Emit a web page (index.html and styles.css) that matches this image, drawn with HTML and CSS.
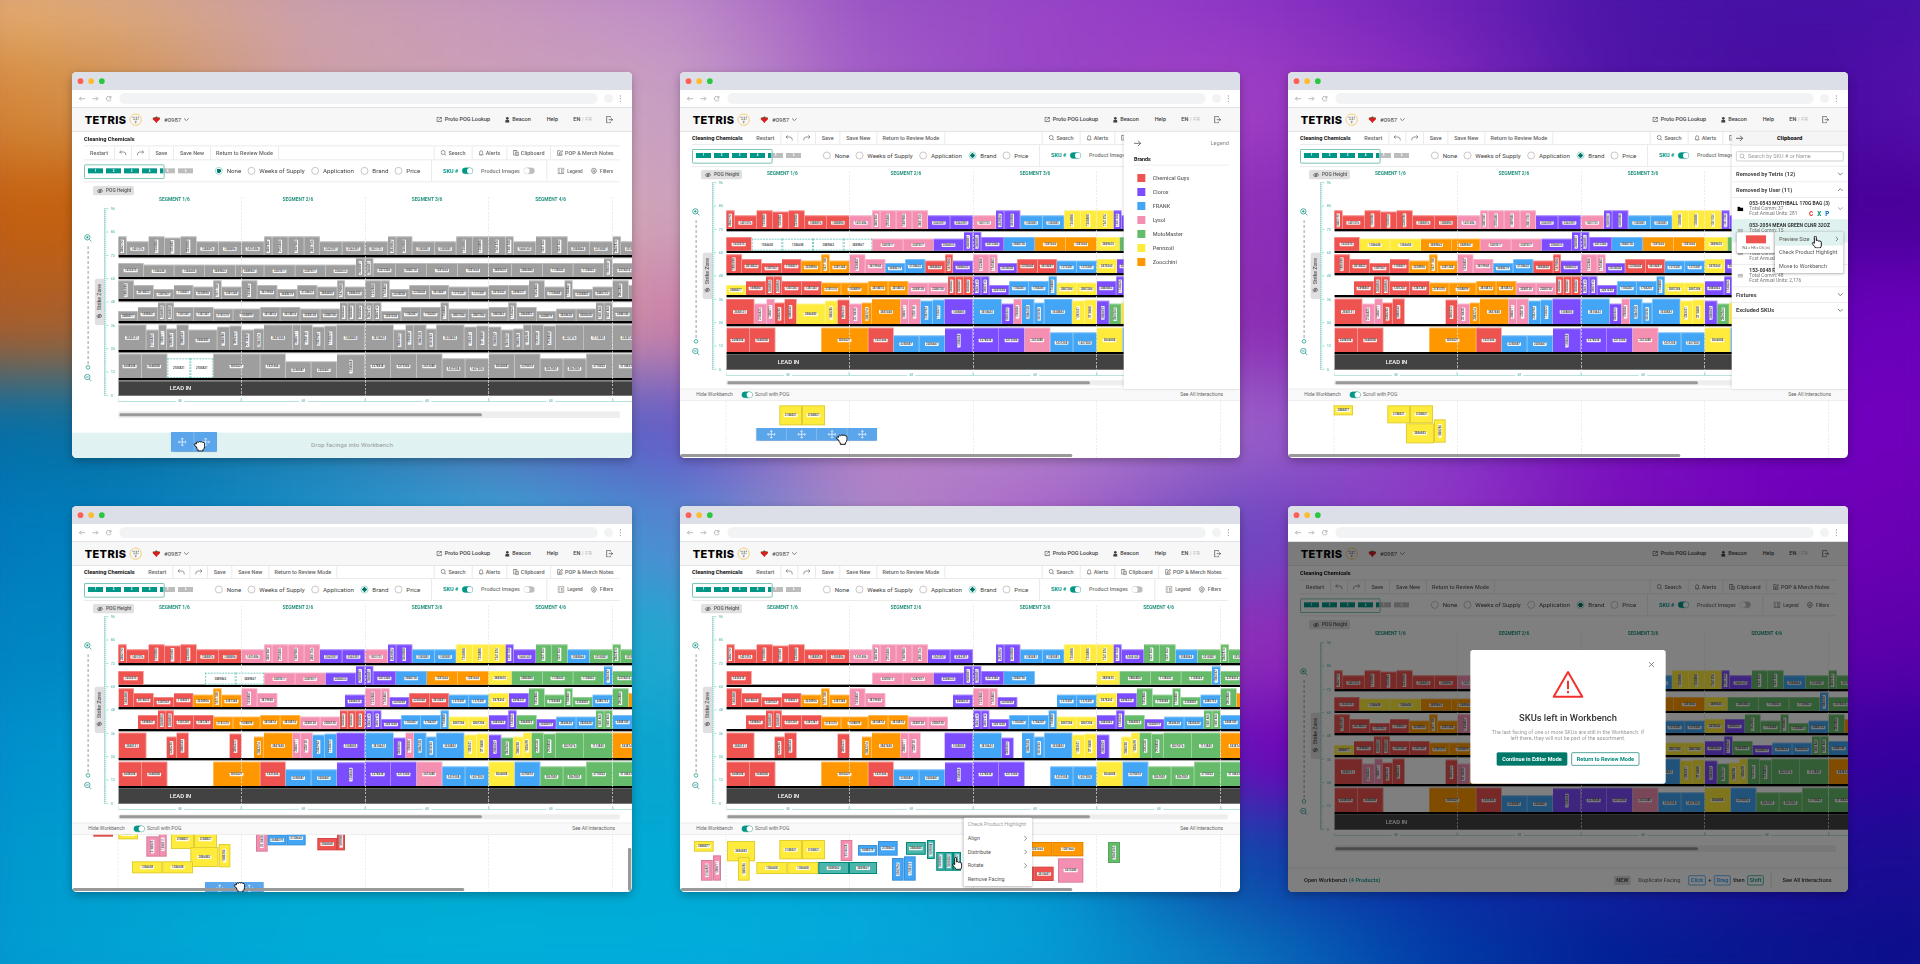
FILE: index.html
```html
<!DOCTYPE html>
<html lang="en">
<head>
<meta charset="utf-8">
<title>Tetris planogram editor</title>
<link rel="stylesheet" href="styles.css">
</head>
<body>
<div class="stage">
<div class="backdrop" id="backdrop"></div>
<main class="gallery" id="gallery"></main>
</div>
<script src="app.js"></script>
</body>
</html>
```

FILE: styles.css
```css
* { box-sizing: border-box; }
body {
  margin: 0;
  font-family: Roboto, "Liberation Sans", sans-serif;
  color: #424242;
  background: #5a2bb0;
}
.stage {
  position: relative;
  width: 1920px;
  height: 964px;
  overflow: hidden;
  contain: paint;
}
svg { display: block; flex: none; }
.backdrop {
  position: absolute;
  inset: -60px;
  display: flex;
  flex-direction: column;
  filter: blur(34px);
}
.backdrop div { flex: 1; }
.gallery {
  position: relative;
  display: grid;
  grid-template-columns: repeat(3, 560px);
  grid-auto-rows: 386px;
  column-gap: 48px;
  row-gap: 48px;
  padding: 72px 72px 0;
}
.frame {
  width: 560px;
  height: 386px;
  border-radius: 5px;
  box-shadow: 0 3px 10px rgba(0, 0, 0, .28);
}
/* windows are authored at three times their shown size */
.win {
  position: relative;
  width: 1680px;
  height: 1158px;
  transform: scale(.333333);
  transform-origin: 0 0;
  display: flex;
  flex-direction: column;
  overflow: hidden;
  border-radius: 14px;
  background: #fff;
}
/* browser chrome */
.titlebar { height: 54px; flex: none; background: #dcdfe7; display: flex; align-items: center; gap: 15px; padding-left: 17px; }
.dot { width: 17px; height: 17px; border-radius: 50%; }
.dot.r { background: #ff5f57; }
.dot.y { background: #febc2e; }
.dot.g { background: #28c840; }
.navbar { height: 54px; flex: none; border-bottom: 3px solid #dfe1e8; display: flex; align-items: center; padding: 0 24px 0 20px; color: #999; }
.navbar svg + svg { margin-left: 20px; }
.url { width: 1435px; height: 33px; border-radius: 17px; background: #f1f3f4; margin-left: 22px; }
.avatar { width: 27px; height: 27px; border-radius: 50%; background: #f1f3f4; margin: 0 19px; }
/* header */
.app { position: relative; flex: 1; min-height: 0; display: flex; flex-direction: column; }
.header { height: 72px; flex: none; background: #f7f7f7; border-bottom: 3px solid #e4e4e4; display: flex; align-items: center; padding-left: 38px; font-size: 16.5px; font-weight: 500; white-space: nowrap; }
.logo { font-family: Inter, sans-serif; font-weight: 800; font-size: 33px; letter-spacing: 1.2px; color: #000; width: 133px; flex: none; }
.seal { margin-right: 30px; }
.store { display: flex; align-items: center; gap: 11px; font-size: 18px; font-weight: 400; color: #444; width: 852px; flex: none; }
.store b { font-weight: 400; margin-right: -4px; }
.hlink { display: flex; align-items: center; gap: 8px; flex: none; }
.hl1 { width: 206px; }
.hl2 { width: 125px; }
.hl3 { width: 80px; }
.hl4 { width: 98px; }
.hl4 span { color: #bbb; font-weight: 400; }
/* toolbar */
.pagetitle { height: 40px; flex: none; padding-left: 36px; line-height: 42px; font-size: 17px; font-weight: 700; color: #111; }
.toolbar { margin: 0 37px 0 36px; flex: none; height: 39px; display: flex; border-bottom: 3px solid #ebebeb; font-size: 16.5px; font-weight: 500; color: #666; }
.toolbar.tall { height: 45px; border-top: 3px solid #ebebeb; }
.toolbar .lead { width: 175px; flex: none; font-size: 17px; font-weight: 700; color: #111; align-self: center; white-space: nowrap; }
.cell { display: flex; flex: none; align-items: center; justify-content: center; gap: 6px; border-right: 3px solid #ebebeb; white-space: nowrap; }
.c1 { width: 93px; } .c2 { width: 51px; } .c3 { width: 53px; } .c4 { width: 73px; } .c5 { width: 111px; } .c6 { width: 204px; }
.push { margin-left: auto; border-left: 3px solid #ebebeb; }
.c7 { width: 117px; } .c8 { width: 104px; } .c9 { width: 131px; } .c10 { width: 206px; border-right: 0; }
.filters { margin: 0 37px 0 36px; flex: none; height: 66px; display: flex; align-items: center; border-bottom: 3px solid #ebebeb; font-size: 18.5px; color: #444; white-space: nowrap; }
.filters > * { flex: none; }
.minimap { width: 393px; position: relative; display: flex; gap: 9px; padding-left: 12px; }
.minimap::before { content: ""; position: absolute; left: 0; top: -12px; width: 236px; height: 38px; border: 3px solid #80c4b8; border-radius: 3px; }
.minimap i { width: 45px; height: 15px; background: #009688; color: #fff; font: 700 9px/15px Roboto; text-align: center; }
.minimap i.half { background: linear-gradient(90deg, #009688 8px, #bdbdbd 8px); }
.minimap i.off { background: #bdbdbd; }
.radio { display: flex; align-items: center; gap: 12px; }
.radio::before { content: ""; width: 19px; height: 19px; border: 2px solid #aaa; border-radius: 50%; background: #fff; }
.radio.on::before { border-color: #7cc4bb; background: radial-gradient(#00796b 6px, #fff 7px); }
.r1 { width: 98px; } .r2 { width: 191px; } .r3 { width: 148px; } .r4 { width: 102px; } .r5 { width: 109px; }
.opts { align-self: stretch; display: flex; align-items: center; border-left: 3px solid #ebebeb; padding-left: 33px; width: 346px; font-size: 16.5px; font-weight: 500; color: #777; }
.opts .sku { color: #009688; width: 57px; font-weight: 700; }
.opts .pi { margin-left: 24px; width: 128px; }
.toggle { width: 33px; height: 19px; flex: none; border-radius: 10px; background: #bdbdbd; border: 1px solid #bdbdbd; display: flex; }
.toggle::before { content: ""; width: 17px; height: 17px; border-radius: 50%; background: #fff; }
.toggle.on { background: #009688; border-color: #009688; justify-content: flex-end; }
.minor { align-self: stretch; display: flex; align-items: center; gap: 9px; border-left: 3px solid #ebebeb; padding-left: 31px; font-size: 14px; font-weight: 500; color: #666; }
.minor span { margin-right: 15px; }
.minor span:last-child { margin-right: 0; }
/* planogram */
.heightpill { position: absolute; left: 63px; top: 186px; width: 123px; height: 28px; background: #e0e0e0; border-radius: 5px; font-size: 14.5px; font-weight: 500; display: flex; align-items: center; gap: 8px; padding-left: 12px; color: #555; white-space: nowrap; z-index: 2; }
.win.titled .heightpill { top: 234px; }
.pog { flex: none; height: 629px; margin-top: 6px; display: flex; }
.win.titled .pog { margin-top: 38px; }
.zoomer { width: 24px; margin-left: 36px; padding-top: 117px; display: flex; flex-direction: column; align-items: center; color: #00897b; flex: none; }
.zoomer .track { width: 5px; height: 356px; margin-top: 13px; background: repeating-linear-gradient(#c4c4c4 0 9px, transparent 9px 15px); }
.zoomer .knob { width: 14px; height: 14px; border: 3px solid #4db6a6; border-radius: 50%; margin-bottom: 12px; background: #fff; }
.strike { margin: 251px 0 0 8px; width: 28px; height: 139px; background: #e0e0e0; writing-mode: vertical-rl; transform: rotate(180deg); border-radius: 0 8px 8px 0; display: flex; align-items: center; gap: 9px; padding-top: 18px; font-size: 15.5px; font-weight: 500; color: #555; flex: none; }
.ruler { width: 43px; padding-top: 36px; flex: none; }
.board { position: relative; flex: 1; min-width: 0; overflow: hidden; }
.segnames { display: grid; grid-template-columns: 369px 372px 370px 372px; height: 28px; font-size: 14.5px; font-weight: 700; line-height: 28px; color: #26937f; text-align: center; }
.segnames span:nth-child(-n+2) { padding-right: 33px; }
.shelf { display: flex; align-items: flex-end; border-bottom: 7px solid #000; overflow: hidden; }
.s1 { height: 159px; } .s2 { height: 65px; } .s3 { height: 67px; } .s4 { height: 66px; } .s5 { height: 87px; } .s6 { height: 84px; }
.tile { flex: none; display: flex; align-items: center; justify-content: center; border-right: 2px solid rgba(255, 255, 255, .5); border-top: 3px solid rgba(255, 255, 255, .3); }
.tile span { font-size: 8.6px; line-height: 11px; font-weight: 700; background: rgba(255, 255, 255, .9); color: #555; padding: 0 3px; border-radius: 2px; letter-spacing: .1px; }
.tile.v span { writing-mode: vertical-rl; transform: rotate(180deg); padding: 3px 0; }
.R { background-color: #ef5350; } .P { background-color: #f48fb1; } .U { background-color: #7c4dff; } .B { background-color: #42a5f5; }
.Y { background-color: #ffeb3b; } .O { background-color: #ff9800; } .G { background-color: #66bb6a; } .T { background-color: #4db6ac; }
.win.gray .shelf .tile { background-color: #9e9e9e; }
.win.gray .shelf { box-shadow: 0 3px #c4c4c4; position: relative; }
.shelf .tile.gap { visibility: hidden; }
.shelf .tile.ghost, .win.gray .shelf .tile.ghost { background: #fff; border: 3px dashed #80cbc4; }
.leadin { height: 47px; background: #424242; border-bottom: 3px solid #777; color: #fff; font-size: 17.5px; font-weight: 500; line-height: 44px; text-align: center; padding-right: 1168px; white-space: nowrap; }
.seams { position: absolute; left: 0; top: 6px; height: 597px; display: grid; grid-template-columns: 370px 372px 370px 372px; }
.seams i { background: repeating-linear-gradient(#e4e4e4 0 7px, transparent 7px 11px) right / 2px 100% no-repeat; }
.widths { display: grid; grid-template-columns: 369px 372px 370px 372px 372px; height: 26px; padding-top: 8px; color: #80cbc4; font-size: 10px; font-weight: 700; }
.widths span { display: flex; align-items: center; gap: 7px; height: 14px; }
.widths span::before, .widths span::after { content: ""; flex: 1; height: 8px; border-bottom: 2px solid #9ad6cd; margin-bottom: 6px; }
.widths span::before { border-left: 2px solid #9ad6cd; }
.widths span::after { border-right: 2px solid #9ad6cd; }
.scroll { flex: none; margin: 5px 37px 0 139px; height: 15px; background: #eee; display: flex; align-items: center; }
.win.titled .scroll { margin-top: 20px; height: 20px; }
.scroll i { width: 1088px; height: 9px; margin-left: 3px; border-radius: 5px; background: #999; }
/* workbench */
.benchbar { position: relative; flex: none; margin-top: 10px; height: 36px; background: #f9f9f9; border-top: 2px solid #e8e8e8; border-bottom: 2px solid #e8e8e8; display: flex; align-items: center; font-size: 15px; color: #666; padding: 0 51px 0 49px; }
.benchbar .hide { width: 136px; }
.benchbar .toggle { margin: 0 7px 0 0; }
.benchbar .all { margin-left: auto; }
.bench { position: relative; flex: 1; overflow: hidden; }
.bench .lines { position: absolute; inset: 0; padding-left: 137px; display: grid; grid-template-columns: 2px 370px 372px 370px 372px; }
.bench .lines i { background: repeating-linear-gradient(#e6e6e6 0 7px, transparent 7px 11px) right / 2px 100% no-repeat; }
.bench .tile { position: absolute; border: 3px solid rgba(0, 0, 0, .12); }
.bench .tile.T { border-color: #00897b; }
.drag { position: absolute; display: flex; background: #5ba5ea; box-shadow: 0 2px 5px rgba(0, 0, 0, .25); color: #fff; }
.drag div { flex: 1; display: flex; align-items: center; justify-content: center; }
.drag div + div { border-left: 2px solid #8cc3f4; }
.cursor { position: absolute; z-index: 6; }
.hbar { position: absolute; left: 2px; bottom: 3px; width: 1175px; height: 9px; border-radius: 5px; background: #999; }
.vbar { position: absolute; right: 2px; bottom: 3px; width: 10px; height: 130px; border-radius: 5px; background: #999; }
.dropzone { margin-top: auto; height: 76px; background: #e0f2f1; text-align: center; line-height: 77px; font-size: 18.7px; letter-spacing: .2px; color: #999; }
/* side panels */
.panel { position: absolute; right: 0; top: 71px; width: 349px; height: 772px; background: #fff; box-shadow: -3px 0 9px rgba(0, 0, 0, .2); z-index: 3; }
.legend { padding: 22px 33px 0 31px; }
.legend .top { display: flex; justify-content: space-between; align-items: center; color: #888; font-size: 17px; height: 26px; }
.legend .top svg { color: #333; }
.legend h4 { margin: 22px 0 16px; height: 32px; padding-bottom: 6px; border-bottom: 3px solid #eee; line-height: 24px; font-size: 16px; color: #111; font-weight: 700; }
.legend .row { display: flex; align-items: center; height: 42px; gap: 22px; padding-left: 10px; font-size: 16.5px; font-weight: 500; color: #666; }
.legend .row i { width: 24px; height: 24px; }
.clip .top { height: 42px; background: #f5f5f5; border-bottom: 3px solid #e6e6e6; display: flex; align-items: center; padding-left: 13px; font-size: 17.5px; font-weight: 700; color: #222; }
.clip .top b { flex: 1; text-align: center; padding-right: 36px; }
.clip .find { margin: 17px 13px 13px; height: 30px; border: 2px solid #bbb; border-radius: 4px; display: flex; align-items: center; gap: 9px; padding-left: 8px; font-size: 16.5px; color: #999; }
.clip .sec { height: 47px; border-top: 3px solid #ececec; display: flex; align-items: center; justify-content: space-between; padding: 0 15px 0 13px; font-size: 17px; font-weight: 700; color: #444; }
.clip .sec.last { border-bottom: 3px solid #ececec; height: 50px; }
.clip .item { position: relative; height: 67px; border-top: 3px solid #ececec; display: flex; align-items: center; padding: 0 15px 0 17px; gap: 18px; font-size: 14.5px; line-height: 16px; color: #777; white-space: nowrap; }
.clip .item b { display: block; font-size: 14.8px; color: #333; }
.clip .item.hot { background: #dff2f0; border-top-color: #dff2f0; }
.clip .item .txt { width: 264px; }
.clip .item .txt + svg { margin-left: -11px; }
.clip .cxp { position: absolute; right: 56px; bottom: 4px; display: flex; gap: 12px; font-size: 19px; line-height: 24px; font-weight: 900; }
.preview { position: absolute; left: 15px; top: 302px; width: 116px; height: 62px; background: #fff; border-radius: 5px; box-shadow: 0 1px 6px rgba(0, 0, 0, .3); text-align: center; font-size: 11px; padding-top: 9px; color: #666; z-index: 5; }
.preview i { display: block; width: 60px; height: 24px; background: #ef5350; margin: 0 auto 8px; }
.menu { position: absolute; z-index: 5; width: 205px; background: #fff; border-radius: 4px; box-shadow: 0 2px 8px rgba(0, 0, 0, .3); font-size: 16.3px; color: #555; white-space: nowrap; overflow: hidden; }
.menu div { height: 41px; display: flex; align-items: center; justify-content: space-between; padding: 0 14px 0 12px; }
.menu .hot { background: #dff2f0; }
.menu .dim { color: #9e9e9e; }
.clip .menu { left: 130px; top: 301px; }
.m5 { left: 851px; top: 827px; }
/* closing dialog */
.footer { margin-top: auto; height: 74px; border-top: 3px solid #e6e6e6; display: flex; align-items: center; font-size: 17px; font-weight: 500; color: #333; padding: 0 49px 0 48px; white-space: nowrap; }
.footer em { font-style: normal; color: #009688; margin-left: 5px; }
.footer .new { margin-left: auto; background: #ddd; border-radius: 4px; padding: 4px 7px; font-weight: 700; margin-right: 23px; color: #555; }
.footer .dup { color: #777; margin-right: 24px; }
.footer .key { border: 2px solid #2196f3; border-radius: 4px; color: #2196f3; padding: 3px 5px; margin-right: 8px; }
.footer .plus { margin-right: 8px; }
.footer .key.t { border-color: #009688; color: #009688; margin: 0 21px 0 8px; }
.footer .see { border-left: 3px solid #e0e0e0; line-height: 46px; padding-left: 32px; }
.shade { position: absolute; inset: 0; background: rgba(0, 0, 0, .5); z-index: 8; }
.dialog { position: absolute; z-index: 9; left: 547px; top: 324px; width: 586px; height: 401px; background: #fff; border-radius: 8px; padding-top: 61px; display: flex; flex-direction: column; align-items: center; text-align: center; }
.dialog .close { position: absolute; right: 34px; top: 35px; color: #555; }
.dialog h3 { margin: 42px 0 17px; font-size: 28px; line-height: 32px; font-weight: 500; color: #333; }
.dialog p { margin: 0; font-size: 16px; line-height: 19px; color: #999; width: 476px; }
.dialog .btns { display: flex; gap: 12px; margin-top: 33px; }
.dialog .btns span { height: 40px; line-height: 36px; border: 2px solid #00796b; border-radius: 4px; font-size: 16.5px; font-weight: 700; color: #00897b; padding: 0 14px; white-space: nowrap; }
.dialog .btns .main { background: #00796b; color: #fff; padding: 0 15px; }
```

FILE: app.js
```js
const svg = (w, h, body, vb) =>
  `<svg width="${w}" height="${h}" viewBox="${vb || `0 0 ${w} ${h}`}" fill="none" stroke="currentColor" stroke-width="2">${body}</svg>`;

const icon = {
  back: svg(20, 16, '<path d="M19 8H2M8 2 2 8l6 6"/>'),
  fwd: svg(20, 16, '<path d="M1 8h17M12 2l6 6-6 6"/>'),
  reload: svg(20, 18, '<path d="M16 5A7 7 0 1 0 17 11M17 1v6h-6"/>'),
  more: svg(6, 22, '<g fill="currentColor" stroke="none"><circle cx="3" cy="3" r="2"/><circle cx="3" cy="11" r="2"/><circle cx="3" cy="19" r="2"/></g>'),
  seal: svg(40, 40, '<circle cx="20" cy="20" r="17" stroke="#f5cf72" stroke-width="3"/><g stroke="none" fill="#999"><path d="M10 11h4v4h-4zM16 11h3v4h-3zM21 11h3v4h-3zM26 11h4v4h-4zM13 17h5v4h-5zM20 16h4v5h-4zM26 17h3v4h-3zM17 23h6v3h-6zM18 27h4v4h-4z"/></g>'),
  leaf: svg(24, 22, '<path stroke="none" fill="#d6201f" d="M1 5q5-3 8 0h6q3-3 8 0 1 4-2 7-5 2-9 10-4-8-9-10-3-3-2-7z"/><path stroke="none" fill="#35703a" d="M12 0l2 3h3l-2 4H9L7 3h3z"/>'),
  down: svg(16, 10, '<path d="M1 1l7 7 7-7"/>'),
  up: svg(16, 10, '<path d="M1 9l7-7 7 7"/>'),
  right: svg(10, 16, '<path d="M1 1l7 7-7 7"/>'),
  out: svg(17, 17, '<path d="M9 2H2v13h13V9M7 10l8-8M10 2h5v5"/>'),
  user: svg(14, 18, '<g fill="currentColor" stroke="none"><circle cx="7" cy="5" r="4"/><path d="M1 18V12q0-3 6-3t6 3v6z"/></g>'),
  exit: svg(22, 22, '<path d="M13 5V1H2v20h11v-4M8 11h12M16 7l4 4-4 4"/>'),
  undo: svg(24, 18, '<path d="M7 1 2 6l5 5M2 6h12q7 0 7 10"/>'),
  redo: svg(24, 18, '<path d="M17 1l5 5-5 5M22 6H10q-7 0-7 10"/>'),
  search: svg(17, 18, '<circle cx="7.500" cy="7.500" r="6"/><path d="M12 12l4 5"/>'),
  bell: svg(15, 18, '<path d="M1 14h13l-2-4V6q-1-4-4.500-4T3 6v4zM6 17h3"/>'),
  clip: svg(18, 18, '<path d="M5 15H1V2h11v3M4 2V1h5v2M7 7h9v10H7zM10 11h3M10 14h3"/>'),
  note: svg(18, 18, '<path d="M9 2H2v14h13V9M7 11l1-4 7-6 2 2-7 7zM5 13h6"/>'),
  legend: svg(20, 19, '<path d="M1 1h18v17H1zM5 6h2M10 6h5M5 10h2M10 10h5M5 14h2M10 14h5"/>'),
  gear: svg(19, 19, '<path d="M7 1h5l1 3 3 1 2 4-2 4-3 1-1 4H7l-1-4-3-1-2-4 2-4 3-1z"/><circle cx="9.500" cy="9.500" r="3"/>'),
  eye: svg(19, 17, '<path d="M1 9q3-5 8-5t8 5q-3 5-8 5T1 9zM4 15 15 2"/><circle cx="9" cy="9" r="2.500"/>'),
  plus: svg(24, 24, '<circle cx="10" cy="10" r="8"/><path d="M16 16l6 6M6 10h8M10 6v8"/>'),
  minus: svg(24, 24, '<circle cx="10" cy="10" r="8"/><path d="M16 16l6 6M6 10h8"/>'),
  arrow: svg(22, 18, '<path d="M0 9h20M12 1l8 8-8 8"/>'),
  move: svg(26, 26, '<path d="M13 2v22M2 13h22M9 5l4-4 4 4M9 21l4 4 4-4M5 9l-4 4 4 4M21 9l4 4-4 4"/>'),
  folder: svg(18, 15, '<path stroke="none" fill="#000" d="M0 1h7l2 3h9v11H0z"/>'),
  lines: svg(18, 12, '<path stroke="#888" d="M1 2h16M1 6h16M1 10h16"/>'),
  close: svg(17, 17, '<path d="M1 1l15 15M16 1 1 16"/>'),
  warn: svg(94, 84, '<path d="M47 5 4 79h86z" stroke="#f2302c" stroke-width="6" stroke-linejoin="round"/><path d="M47 31v26M47 62v7" stroke="#f2302c" stroke-width="6"/>'),
  grab: svg(36, 34, '<path fill="#fff" stroke="#111" stroke-width="3" stroke-linejoin="round" d="M9 19 4 16q-4-5 1-6l4 1V7q2-4 6-1 3-4 7-1 4-3 6 1 5-1 6 4v9q-1 6-5 9v4H14v-4q-4-3-5-9z"/>'),
  point: svg(32, 38, '<path fill="#fff" stroke="#111" stroke-width="3" stroke-linejoin="round" d="M9 23V5q0-4 3-4t3 4v10q4-3 6 1 3-2 5 1 4-1 4 3v8q0 5-3 9H13q-3-5-8-10-4-5-1-6 2-1 5 2z"/>')
};

// Each facing: [right edge, brand colour, height]; a fourth value turns the label
const shelves = [
  [[170,'R',56],[236,'R',41],[284,'R',56],[332,'R',52],[380,'R',56],[446,'R',41],[515,'R',41],[583,'P',41],[607,'P',56],[655,'P',56],[703,'P',56],[750,'P',56],[817,'U',41],[885,'U',41],[954,'P',41],[979,'U',56],[1027,'U',56],[1094,'B',41],[1159,'B',41],[1208,'Y',56],[1257,'Y',56],[1307,'Y',56],[1331,'U',56],[1398,'U',41],[1445,'G',56],[1493,'G',56],[1559,'B',41],[1628,'G',41],[1653,'G',56],[1720,'G',41]],
  [[221,'R',41],[313,'Y',36],[405,'Y',36],[497,'O',36],[583,'O',36],[676,'P',36],[767,'P',36],[858,'U',36],[884,'U',56],[910,'U',56],[978,'U',41],[1071,'B',41],[1163,'O',41],[1257,'O',41],[1325,'Y',41],[1418,'G',41],[1510,'G',41],[1602,'G',41],[1628,'B',55],[1700,'G',41]],
  [[192,'R',56],[251,'R',42],[312,'R',30],[370,'R',42],[430,'O',37],[455,'O',56],[515,'O',37],[562,'P',56],[622,'P',42],[682,'B',30],[742,'B',42],[802,'R',37],[825,'R',56],[885,'U',37],[934,'P',56],[959,'P',56],[1018,'U',30],[1079,'R',42],[1137,'R',42],[1197,'B',37],[1257,'B',37],[1317,'Y',42],[1377,'U',42],[1424,'G',56],[1484,'G',37],[1508,'G',56],[1568,'G',30],[1628,'B',37],[1676,'G',56],[1740,'O',42]],
  [[204,'Y',30],[264,'R',42],[288,'R',56],[312,'R',56],[371,'R',42],[431,'R',42],[490,'O',37],[571,'O',37],[631,'O',42],[691,'O',42],[751,'P',37],[810,'P',37],[833,'R',56],[858,'R',56],[885,'R',56],[910,'U',56],[934,'U',56],[994,'U',30],[1053,'B',42],[1112,'B',42],[1137,'B',56],[1196,'Y',37],[1257,'Y',37],[1315,'U',42],[1340,'U',56],[1400,'G',42],[1459,'U',30],[1519,'B',37],[1578,'B',37],[1603,'G',56],[1628,'G',56],[1690,'B',42]],
  [[229,'R',76],[266,'P',61],[290,'P',76],[320,'R',64],[356,'R',76],[442,'Y',61],[479,'Y',70],[515,'R',73],[552,'P',61],[582,'O',64],[668,'O',76],[692,'P',76],[728,'P',76],[764,'B',70],[800,'B',73],[885,'U',76],[971,'B',76],[1007,'U',61],[1032,'P',76],[1069,'B',76],[1099,'B',64],[1183,'B',76],[1220,'Y',70],[1257,'Y',73],[1294,'U',70],[1330,'G',61],[1360,'Y',64],[1385,'Y',76],[1421,'G',76],[1457,'G',73],[1542,'G',76],[1628,'G',76],[1720,'O',76]],
  [[215,'R',73],[292,'R',73],[361,'Y',59],[430,'Y',59],[571,'O',73],[647,'R',73],[724,'B',50],[801,'B',50],[885,'U',71,1],[963,'U',73],[1040,'U',73],[1117,'P',73],[1186,'B',59],[1257,'B',59],[1334,'Y',73],[1411,'B',73],[1480,'G',59],[1549,'G',59],[1628,'G',73],[1710,'G',73]]
];

const codes = [
  '2882192 1401276 1550586 1575055 2230786 1288876 1288896 1431406 3887587 2755486 1889586 2881756 3343297 3343297 1831721 2830057 3460588 1383881 1383881 1268008 1268808 1241574 1381748 1446143 1821552 1821552 3588864 2318087 2847816 3018422',
  '1433415 1384608 1384608 3889862 3889867 3287817 2287817 2284533 2848801 2848801 3473386 3884736 1281664 1281664 2889435 2886884 1138662 1138662 1584747 2378414',
  '1886088 2818823 1387561 1108831 3238906 1871188 3381348 1838857 3819948 3688219 2138662 2884840 1870008 2886023 1232888 1745883 3418028 2238468 2818487 1373281 1373281 2878262 2898321 1852884 1738688 1788887 3328805 2486732 2863884 1442873',
  '2888877 1898861 2688055 2688055 1387287 1387287 3181315 1508899 3818874 3818874 2288128 2288128 3588282 3588282 3588282 2887214 2887214 2281028 1784287 1784287 1758888 2887284 2887284 3885862 1738225 2868852 3428819 2828628 2828628 1881846 1881846 3888180',
  '2588121 2184825 1288711 3288255 3888563 2886882 1888286 3804272 2518428 2882214 3887488 2888711 1228136 2382962 1728372 1388885 3818443 2886663 1788854 3884528 3818746 3528882 1283621 3718488 2888829 2842343 2888258 1828490 2202324 2928858 2821876 1113880 3828745',
  '2688508 3648808 2188821 2188821 3803421 1431466 3258887 2288487 1358848 3278838 3273286 3412480 1437208 1437208 2846888 3278814 3867881 3867881 3718822 3718822'
].map(s => s.split(' '));

const tile = (c, w, h, code, cls = '', extra = '') =>
  `<div class="tile ${c} ${cls}" style="${extra}width:${w}px;height:${h}px"><span>${code}</span></div>`;

function shelfRows(cfg) {
  return shelves.map((row, r) => {
    let x = 145;
    const html = row.map(([end, c, h, turn], i) => {
      const w = end - x;
      x = end;
      let cls = w < 52 || turn ? 'v' : '';
      const key = `${r + 1}.${i}`;
      if (cfg.gone.includes(key)) cls += ' gap';
      if (cfg.ghost.includes(key)) cls += ' ghost';
      return tile(c, w, h, codes[r][i], cls);
    }).join('');
    return `<div class="shelf s${r + 1}">${html}</div>`;
  }).join('');
}

function ruler() {
  let d = '', t = '';
  for (let i = 0; i <= 96; i++) {
    const y = 5 + i * 5.833;
    d += `M1 ${y}h${i % 12 ? 6 : 12}`;
    if (i % 12 === 0) t += `<text x="20" y="${y + 4}">${96 - i}</text>`;
  }
  return svg(43, 572, `<path stroke="#80cbc4" d="M1 4v562${d}"/><g fill="#80cbc4" stroke="none" font-size="11" font-weight="700">${t}</g>`);
}

const toolbar = lead => `
<div class="toolbar ${lead ? '' : 'tall'}">
  ${lead ? '<span class="lead">Cleaning Chemicals</span>' : ''}
  <div class="cell c1">Restart</div><div class="cell c2">${icon.undo}</div><div class="cell c3">${icon.redo}</div>
  <div class="cell c4">Save</div><div class="cell c5">Save New</div><div class="cell c6">Return to Review Mode</div>
  <div class="cell c7 push">${icon.search}Search</div><div class="cell c8">${icon.bell}Alerts</div>
  <div class="cell c9">${icon.clip}Clipboard</div><div class="cell c10">${icon.note}POP &amp; Merch Notes</div>
</div>`;

const filters = pick => `
<div class="filters">
  <div class="minimap"><i>1</i><i>2</i><i>3</i><i>4</i><i class="half">5</i><i class="off">6</i></div>
  ${['None', 'Weeks of Supply', 'Application', 'Brand', 'Price'].map((n, i) =>
    `<div class="radio r${i + 1} ${n === pick ? 'on' : ''}">${n}</div>`).join('')}
  <div class="opts"><span class="sku">SKU #</span><i class="toggle on"></i><span class="pi">Product Images</span><i class="toggle"></i></div>
  <div class="minor">${icon.legend}<span>Legend</span>${icon.gear}<span>Filters</span></div>
</div>`;

const place = (x, y) => `left:${x}px;top:${y}px;`;
const cursor = (name, x, y) => `<div class="cursor" style="${place(x, y)}">${icon[name]}</div>`;
const drag = (x, y, w, h, n) =>
  `<div class="drag" style="${place(x, y)}width:${w}px;height:${h}px">${`<div>${icon.move}</div>`.repeat(n)}</div>`;

// Workbench items: [x, y, w, h, colour, code], measured from the workbench corner
const bench = items => items.map(([x, y, w, h, c, code]) =>
  tile(c, w, h, code, w < 50 ? 'v' : '', place(x, y))).join('');

const benchArea = (items, more) => `
<div class="benchbar"><span class="hide">Hide Workbench</span><i class="toggle on"></i><span>Scroll with POG</span><span class="all">See All Interactions</span></div>
<div class="bench"><div class="lines"><i></i><i></i><i></i><i></i><i></i></div>${bench(items)}${more}<i class="hbar"></i></div>`;

const legend = `
<aside class="panel legend"><div class="top">${icon.arrow}<span>Legend</span></div><h4>Brands</h4>
${[['R', 'Chemical Guys'], ['U', 'Clorox'], ['B', 'FRANK'], ['P', 'Lysol'], ['G', 'MotoMaster'], ['Y', 'Pennzoil'], ['O', 'Zoocchini']]
  .map(([c, n]) => `<div class="row"><i class="${c}"></i>${n}</div>`).join('')}</aside>`;

const clipboard = `
<aside class="panel clip"><div class="top">${icon.arrow}<b>Clipboard</b></div>
<div class="find">${icon.search}Search by SKU # or Name</div>
<div class="sec">Removed by Tetris (12)${icon.down}</div>
<div class="sec">Removed by User (11)${icon.up}</div>
<div class="item">${icon.folder}<div class="txt"><b>053-0543 MOTHBALL 170G BAG (3)</b>Total Comm: 37<br>Fcst Annual Units: 281</div>${icon.down}
<div class="cxp"><span style="color:#e53935">C</span><span style="color:#0f9d76">X</span><span style="color:#1976d2">P</span></div></div>
<div class="item hot">${icon.lines}<div class="txt"><b>053-2054 MEAN GREEN CLNR 32OZ</b>Total Comm: 15<br>Fcst Annual Units: 96</div></div>
<div class="item">${icon.lines}<div class="txt"><b>053-8822 CLNR</b>Total Comm: 22<br>Fcst Annual Units: 310</div></div>
<div class="item">${icon.lines}<div class="txt"><b>153-0048 FABRIC CLNR</b>Total Comm: 48<br>Fcst Annual Units: 2,176</div></div>
<div class="sec">Fixtures${icon.down}</div><div class="sec last">Excluded SKUs${icon.down}</div>
<div class="preview"><i></i>W4 x H8 x D5 (in)</div>
<div class="menu"><div class="hot">Preview Size${icon.right}</div><div>Check Product Highlight</div><div>Move to Workbench</div></div>
${cursor('point', 239, 312)}
</aside>`;

const cursorMenu = `
<div class="menu m5"><div class="dim">Check Product Highlight</div><div>Align${icon.right}</div><div>Distribute${icon.right}</div><div>Rotate${icon.right}</div><div>Remove Facing</div></div>
${cursor('point', 815, 945)}`;

const footer = `
<div class="footer">Open Workbench <em>(4 Products)</em><span class="new">NEW</span><span class="dup">Duplicate Facing</span><span class="key">Click</span><span class="plus">+</span><span class="key">Drag</span>then<span class="key t">Shift</span><span class="see">See All Interactions</span></div>
<div class="shade"></div>
<div class="dialog"><span class="close">${icon.close}</span>${icon.warn}<h3>SKUs left in Workbench</h3>
<p>The last facing of one or more SKUs are still in the Workbench. If left there, they will not be part of the assortment.</p>
<div class="btns"><span class="main">Continue in Editor Mode</span><span>Return to Review Mode</span></div></div>`;

const empty6 = ['6.2', '6.3'];
const windows = [
  { titled: true, gray: true, pick: 'None', gone: [], ghost: empty6,
    tail: `<div class="dropzone">Drop facings into Workbench</div>${drag(297, 972, 138, 59, 2)}${cursor('grab', 364, 997)}` },
  { pick: 'Brand', gone: empty6, ghost: ['2.1', '2.2', '2.3', '2.4'],
    tail: benchArea([[298, 14, 68, 60, 'Y', '2188821'], [366, 14, 69, 60, 'Y', '2188821']],
      drag(229, 82, 362, 38, 4) + cursor('grab', 467, 99)) + legend },
  { pick: 'Brand', gone: [...empty6, '4.0', '5.5', '5.6'], ghost: [],
    tail: benchArea([[137, 14, 58, 30, 'Y', '2888877'], [298, 14, 68, 54, 'Y', '2188821'], [366, 14, 69, 54, 'Y', '2188821'], [354, 68, 84, 60, 'Y', '2886882'], [438, 56, 35, 70, 'Y', '1888286']], '') + clipboard },
  { pick: 'Brand', gone: [...empty6, '2.1', '2.2', '3.9', '3.10', '3.11', '3.12', '4.0', '5.1', '5.2', '5.5', '5.6', '5.8'], ghost: ['2.3', '2.4'],
    tail: benchArea([[64, -30, 59, 36, 'R', '2884840'], [139, -18, 59, 32, 'Y', '2888877'], [223, 5, 37, 61, 'P', '2184825'], [260, -8, 24, 74, 'P', '1288711'],
      [297, -15, 69, 58, 'Y', '2188821'], [366, -15, 69, 58, 'Y', '2188821'], [355, 37, 84, 60, 'Y', '2886882'], [440, 28, 35, 70, 'Y', '1888286'],
      [180, 80, 91, 36, 'Y', '1384608'], [271, 80, 92, 36, 'Y', '1384608'], [552, -12, 35, 63, 'P', '2518428'], [587, 0, 57, 32, 'B', '3688219'], [644, -12, 57, 44, 'B', '2138662'],
      [736, 10, 59, 37, 'R', '3884840'], [795, -10, 24, 57, 'R', '1870008']],
      '<i class="vbar"></i>' + drag(399, 142, 176, 40, 2) + cursor('grab', 484, 140)) },
  { pick: 'Brand', gone: [...empty6, '1.14', '2.1', '2.2', '2.3', '2.4', '2.12', '2.13', '3.9', '3.10', '3.11', '3.12', '3.17', '3.18', '4.0', '4.12', '4.13', '4.14', '5.1', '5.2', '5.5', '5.6', '5.8', '5.13', '5.14', '5.18', '5.25', '6.11'], ghost: [],
    tail: benchArea([[42, 19, 59, 32, 'Y', '2888877'], [63, 76, 35, 62, 'P', '2184825'], [99, 62, 24, 76, 'P', '1288711'], [141, 19, 84, 61, 'Y', '2886882'], [174, 67, 35, 71, 'Y', '1888286'],
      [298, 16, 68, 58, 'Y', '2188821'], [366, 16, 69, 58, 'Y', '2188821'], [229, 82, 93, 36, 'Y', '1384608'], [322, 82, 93, 36, 'Y', '1384608'], [415, 82, 92, 36, 'T', '3889862'], [507, 82, 84, 36, 'T', '3889867'],
      [482, 16, 35, 63, 'P', '2518428'], [534, 31, 58, 32, 'B', '3688219'], [594, 19, 59, 44, 'B', '2138662'], [636, 70, 35, 68, 'B', '2382962'], [672, 65, 35, 73, 'B', '1728372'],
      [678, 22, 59, 38, 'T', '2884840'], [741, 16, 23, 57, 'T', '1870008'], [769, 52, 25, 56, 'T', '3588282'], [794, 52, 25, 56, 'T', '3588282'], [819, 52, 24, 56, 'T', '3588282'],
      [1025, 22, 92, 43, 'O', '1281664'], [1117, 22, 93, 43, 'O', '1281664'], [1004, 96, 59, 43, 'R', '2238468'], [1063, 96, 58, 43, 'R', '2818487'], [1134, 71, 76, 73, 'P', '3412480'], [1284, 22, 36, 63, 'G', '2842343']], '') + cursorMenu },
  { titled: true, pick: 'Brand', gone: [...empty6, '5.5', '5.6'], ghost: [], tail: footer }
];

const render = cfg => `
<section class="frame"><div class="win ${cfg.titled ? 'titled' : ''} ${cfg.gray ? 'gray' : ''}">
  <div class="titlebar"><i class="dot r"></i><i class="dot y"></i><i class="dot g"></i></div>
  <div class="navbar">${icon.back}${icon.fwd}${icon.reload}<div class="url"></div><i class="avatar"></i>${icon.more}</div>
  <div class="app">
    <div class="header"><span class="logo">TETRIS</span><span class="seal">${icon.seal}</span>
      <span class="store">${icon.leaf}<b>#0987</b>${icon.down}</span>
      <span class="hlink hl1">${icon.out}Proto POG Lookup</span><span class="hlink hl2">${icon.user}Beacon</span>
      <span class="hl3">Help</span><span class="hl4">EN<span> / FR</span></span>${icon.exit}</div>
    ${cfg.titled ? '<div class="pagetitle">Cleaning Chemicals</div>' : ''}
    ${toolbar(!cfg.titled)}${filters(cfg.pick)}
    <div class="heightpill">${icon.eye}POG Height</div>
    <div class="pog">
      <div class="zoomer">${icon.plus}<i class="track"></i><i class="knob"></i>${icon.minus}</div>
      <div class="strike">${icon.eye}Strike Zone</div>
      <div class="ruler">${ruler()}</div>
      <div class="board">
        <div class="segnames"><span>SEGMENT 1/6</span><span>SEGMENT 2/6</span><span>SEGMENT 3/6</span><span>SEGMENT 4/6</span></div>
        ${shelfRows(cfg)}
        <div class="leadin">LEAD IN</div>
        <div class="widths"><span>48</span><span>48</span><span>48</span><span>48</span><span>48</span></div>
        <div class="seams"><i></i><i></i><i></i><i></i></div>
      </div>
    </div>
    <div class="scroll"><i></i></div>
    ${cfg.tail}
  </div>
</div></section>`;

document.getElementById('gallery').innerHTML = windows.map(render).join('');

// Colour bands of the backdrop, top to bottom, each spread evenly left to right
const bands = [
  '#e8ae68 #dcaa80 #cba0ac #c898bc #c08cc8 #9a54c4 #9844c6 #8e36c6 #7424b8 #4c14a8 #4410a4 #4a10a8',
  '#d8842c #d09050 #cda0a8 #cd9fb8 #c8a0c4 #a35cc8 #9844c6 #a040c4 #8a2cc0 #5014a8 #480aa0 #5810b0',
  '#c4600e #c4600e #c08060 #d0a0a8 #cfa4bc #b070c0 #9038c0 #9030b8 #7a22b8 #6a10b0 #4a009c #480098',
  '#b05c20 #a86030 #a07080 #d0a0a0 #cc80a8 #c070b0 #9a50c8 #8a2cb0 #8a30c0 #7a10c0 #6600b8 #6c00bc',
  '#0070a8 #0a70a4 #2080b0 #5078b8 #6458c8 #b880c4 #b080cc #9a60c8 #8a40c8 #7a10c0 #7000c0 #7000b8',
  '#0078b8 #0080c0 #1a90cc #38a4d8 #5088d0 #b088c8 #a860c8 #6848c0 #9038c4 #7a10b8 #7000b8 #6600b0',
  '#0084c0 #0088c4 #0098cc #18a4cc #20a8d0 #6a80d0 #7040c0 #9030b8 #8018b8 #7400b0 #6000ac #5800a8',
  '#008cc8 #0098d0 #00a4cc #08a4cc #0aa4d0 #20a0d0 #3080c8 #6e08b8 #6800b4 #5400a8 #3c00a0 #30009c',
  '#0094cc #00a0d0 #00aad0 #00aad0 #00aad4 #04a8d8 #0498d0 #1048a8 #0c2ca4 #1420a0 #1c0c98 #180c90',
  '#0098d0 #00a4d4 #00acd8 #00b0da #00aedc #04a8dc #049cd4 #0878c0 #0040a8 #002094 #08148c #0a0c88'
];
document.getElementById('backdrop').innerHTML = bands
  .map(b => `<div style="background:linear-gradient(90deg,${b.split(' ').join(',')})"></div>`).join('');
```
